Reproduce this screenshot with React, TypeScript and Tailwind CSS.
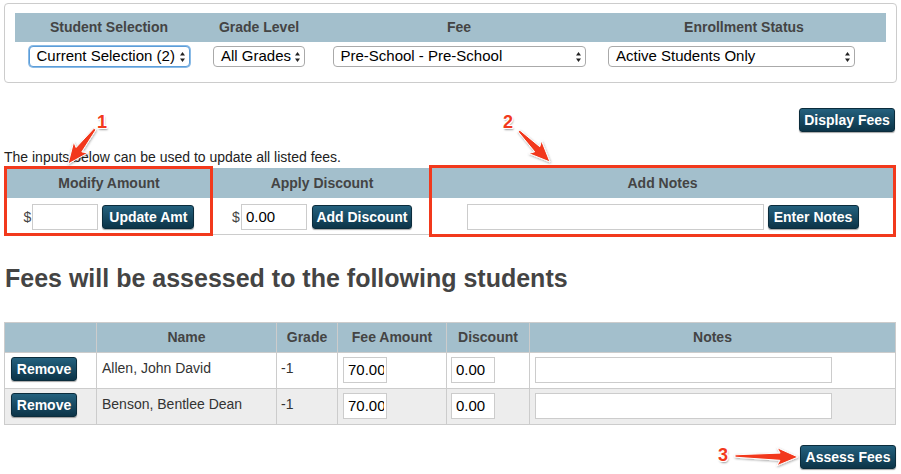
import React from "react";

type Pt = [number, number];

function arrowPoints(tail: Pt, tip: Pt): string {
  const dx = tip[0] - tail[0];
  const dy = tip[1] - tail[1];
  const len = Math.sqrt(dx * dx + dy * dy);
  const ux = dx / len;
  const uy = dy / len;
  const nx = -uy;
  const ny = ux;
  const headLen = 17;
  const headW = 9;
  const shaftTail = 1.2;
  const shaftHead = 3.6;
  const bx = tip[0] - ux * headLen;
  const by = tip[1] - uy * headLen;
  const pts: Pt[] = [
    [tail[0] + nx * shaftTail, tail[1] + ny * shaftTail],
    [bx + nx * shaftHead - ux * 1, by + ny * shaftHead - uy * 1],
    [bx + nx * headW - ux * 4, by + ny * headW - uy * 4],
    [tip[0], tip[1]],
    [bx - nx * headW - ux * 4, by - ny * headW - uy * 4],
    [bx - nx * shaftHead - ux * 1, by - ny * shaftHead - uy * 1],
    [tail[0] - nx * shaftTail, tail[1] - ny * shaftTail],
  ];
  return pts.map((p) => `${p[0].toFixed(1)},${p[1].toFixed(1)}`).join(" ");
}

function Btn({ children, className = "" }: { children: React.ReactNode; className?: string }) {
  return (
    <div
      className={
        "flex h-[24px] items-center justify-center rounded-[3px] border border-[#0b2c3c] bg-gradient-to-b from-[#24617e] to-[#0c3448] text-[14px] font-bold text-white shadow-[0_1px_1px_rgba(0,0,0,0.35)] " +
        className
      }
    >
      {children}
    </div>
  );
}

function Sel({ label, className = "", focus = false }: { label: string; className?: string; focus?: boolean }) {
  return (
    <div
      className={
        "flex h-[21px] items-center justify-between rounded-[4px] border bg-white pl-[7px] pr-[4px] text-[15px] text-black " +
        (focus ? "border-[#5b9dd9] shadow-[0_0_0_1px_#8bbbe6] " : "border-[#aaa] ") +
        className
      }
    >
      <span className="whitespace-nowrap">{label}</span>
      <svg width="5" height="10" viewBox="0 0 5 10" className="ml-[3px] shrink-0">
        <polygon points="2.5,0 5,3.6 0,3.6" fill="#222" />
        <polygon points="2.5,10 5,6.4 0,6.4" fill="#222" />
      </svg>
    </div>
  );
}

function Inp({ value = "", className = "" }: { value?: string; className?: string }) {
  return (
    <div className={"flex h-[26px] items-center border border-[#ccc] bg-white pl-[4px] pr-[2px] text-[15px] text-black " + className}>
      <div className="w-full overflow-hidden whitespace-nowrap">{value}</div>
    </div>
  );
}

export default function App() {
  const red = "#f2391c";
  return (
    <div
      className="relative h-[474px] w-[901px] overflow-hidden bg-white text-[#333]"
      style={{ fontFamily: '"Liberation Sans", Arial, sans-serif' }}
    >
      {/* Top filter panel */}
      <div className="mx-[4px] mt-[3px] h-[80px] rounded-[4px] border border-[#ccc] px-[10px] pt-[9px]">
        <div className="grid h-[29px] grid-cols-[188px_112px_288px_282px] items-center bg-[#a3bfcc] text-[14px] font-bold text-[#444]">
          <div className="text-center">Student Selection</div>
          <div className="text-center">Grade Level</div>
          <div className="text-center">Fee</div>
          <div className="text-center">Enrollment Status</div>
        </div>
        <div className="mt-[4px] grid grid-cols-[188px_112px_288px_282px]">
          <div className="flex justify-center">
            <Sel label="Current Selection (2)" className="w-[161px]" focus />
          </div>
          <div className="flex justify-center">
            <Sel label="All Grades" className="w-[92px]" />
          </div>
          <div className="flex justify-center">
            <Sel label="Pre-School - Pre-School" className="w-[253px]" />
          </div>
          <div className="flex pl-[5px]">
            <Sel label="Active Students Only" className="w-[247px]" />
          </div>
        </div>
      </div>

      {/* Display Fees */}
      <div className="mt-[25px] flex justify-end pr-[6px]">
        <Btn className="w-[96px]">Display Fees</Btn>
      </div>

      <div className="mt-[17px] pl-[4px] text-[14px] leading-[16px] text-[#222]">
        The inputs below can be used to update all listed fees.
      </div>

      {/* Bulk update table */}
      <div className="ml-[4px] mt-[3px] w-[891px]">
        <div className="grid h-[30px] grid-cols-[210px_216px_465px] items-center bg-[#a3bfcc] text-[14px] font-bold text-[#444]">
          <div className="text-center">Modify Amount</div>
          <div className="text-center">Apply Discount</div>
          <div className="text-center">Add Notes</div>
        </div>
        <div className="grid h-[37px] grid-cols-[210px_216px_465px] items-center border-b border-[#ccc] pt-[2px]">
          <div className="flex items-center justify-center">
            <span className="mr-[1px] text-[14px] text-[#444]">$</span>
            <Inp className="w-[66px]" />
            <Btn className="ml-[4px] w-[92px]">Update Amt</Btn>
          </div>
          <div className="flex items-center justify-center">
            <span className="mr-[1px] text-[14px] text-[#444]">$</span>
            <Inp value="0.00" className="w-[66px]" />
            <Btn className="ml-[5px] w-[100px]">Add Discount</Btn>
          </div>
          <div className="flex items-center justify-center">
            <Inp className="w-[297px]" />
            <Btn className="ml-[4px] w-[91px]">Enter Notes</Btn>
          </div>
        </div>
      </div>

      <h2 className="mt-[29px] pl-[5px] text-[25px] font-bold leading-[29px] text-[#444]">
        Fees will be assessed to the following students
      </h2>

      {/* Students table */}
      <div className="ml-[4px] mt-[29px] w-[892px] border border-[#ccc]">
        <div className="grid h-[29px] grid-cols-[92px_180px_61px_109px_83px_1fr] bg-[#a3bfcc] text-[14px] font-bold text-[#444]">
          <div className="border-r border-[#ccc]"></div>
          <div className="flex items-center justify-center border-r border-[#ccc]">Name</div>
          <div className="flex items-center justify-center border-r border-[#ccc]">Grade</div>
          <div className="flex items-center justify-center border-r border-[#ccc]">Fee Amount</div>
          <div className="flex items-center justify-center border-r border-[#ccc]">Discount</div>
          <div className="flex items-center justify-center">Notes</div>
        </div>
        {[
          { name: "Allen, John David", bg: "bg-white" },
          { name: "Benson, Bentlee Dean", bg: "bg-[#ededed]" },
        ].map((r) => (
          <div
            key={r.name}
            className={"grid h-[36px] grid-cols-[92px_180px_61px_109px_83px_1fr] border-t border-[#ccc] text-[14px] text-[#333] " + r.bg}
          >
            <div className="border-r border-[#ccc] pl-[6px] pt-[4px]">
              <Btn className="w-[66px]">Remove</Btn>
            </div>
            <div className="border-r border-[#ccc] pl-[5px] pt-[5px]">{r.name}</div>
            <div className="border-r border-[#ccc] pl-[4px] pt-[5px]">-1</div>
            <div className="border-r border-[#ccc] pl-[5px] pt-[4px]">
              <Inp value="70.00" className="w-[44px]" />
            </div>
            <div className="border-r border-[#ccc] pl-[4px] pt-[4px]">
              <Inp value="0.00" className="w-[44px]" />
            </div>
            <div className="pl-[5px] pt-[4px]">
              <Inp className="w-[297px]" />
            </div>
          </div>
        ))}
      </div>

      <div className="mt-[20px] flex justify-end pr-[5px]">
        <Btn className="w-[96px]">Assess Fees</Btn>
      </div>

      {/* Annotation overlay */}
      <div className="pointer-events-none absolute left-[4px] top-[166px] h-[70px] w-[209px] border-[3px] border-[#f2391c]"></div>
      <div className="pointer-events-none absolute left-[429px] top-[165px] h-[72px] w-[467px] border-[3px] border-[#f2391c]"></div>

      <svg className="pointer-events-none absolute left-0 top-0" width="901" height="474">
        <defs>
          <filter id="sh" x="-20%" y="-20%" width="140%" height="140%">
            <feDropShadow dx="0.5" dy="1" stdDeviation="0.8" floodColor="#000" floodOpacity="0.35" />
          </filter>
        </defs>
        <g filter="url(#sh)">
          <polygon points={arrowPoints([95, 129], [68, 164])} fill={red} stroke="#fff" strokeWidth="1" />
          <polygon points={arrowPoints([519, 131], [550, 162])} fill={red} stroke="#fff" strokeWidth="1" />
          <polygon points={arrowPoints([735, 456], [798, 457])} fill={red} stroke="#fff" strokeWidth="1" />
        </g>
      </svg>

      {[
        { t: "1", x: 97, y: 112 },
        { t: "2", x: 503, y: 112 },
        { t: "3", x: 718, y: 445 },
      ].map((n) => (
        <div
          key={n.t}
          className="absolute text-[18px] font-bold leading-[20px] text-[#f2391c]"
          style={{
            left: n.x,
            top: n.y,
            textShadow:
              "1px 0 #fff, -1px 0 #fff, 0 1px #fff, 0 -1px #fff, 1px 1px #fff, -1px -1px #fff, 1px -1px #fff, -1px 1px #fff, 1px 2px 2px rgba(0,0,0,0.4)",
          }}
        >
          {n.t}
        </div>
      ))}
    </div>
  );
}
